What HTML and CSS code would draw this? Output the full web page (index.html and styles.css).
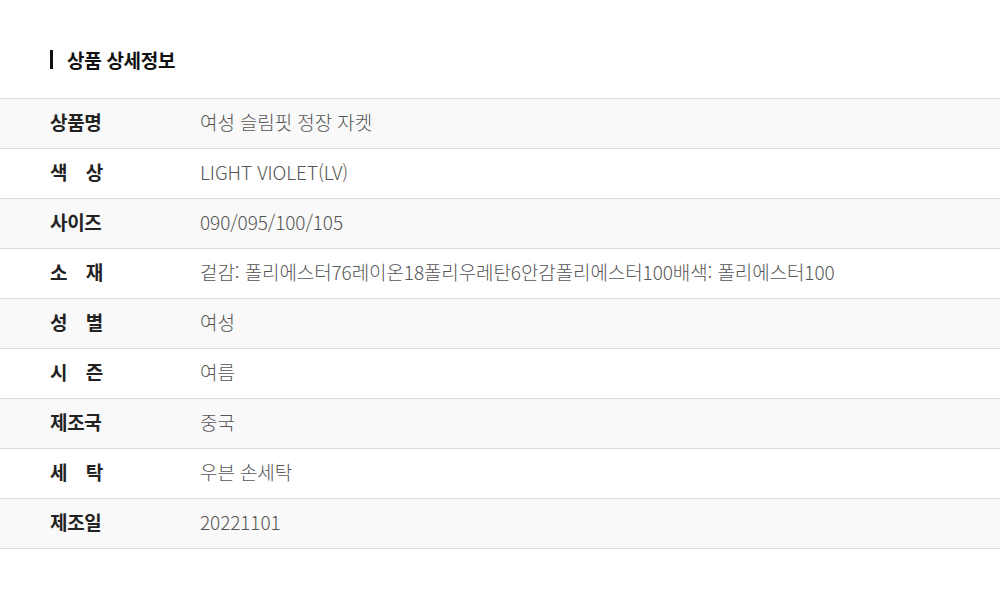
FILE: index.html
```html
<!DOCTYPE html>
<html lang="ko">
<head>
  <meta charset="UTF-8">
  <title>상품 상세정보</title>
  <link rel="stylesheet" href="styles.css">
</head>
<body>

  <section class="detail">
    <h2 class="detail-title">상품 상세정보</h2>

    <table class="info-table">
      <tr>
        <th><span class="label">상품명</span></th>
        <td>여성 슬림핏 정장 자켓</td>
      </tr>
      <tr>
        <th><span class="label">색 상</span></th>
        <td>LIGHT VIOLET(LV)</td>
      </tr>
      <tr>
        <th><span class="label">사이즈</span></th>
        <td>090/095/100/105</td>
      </tr>
      <tr>
        <th><span class="label">소 재</span></th>
        <td>겉감: 폴리에스터76레이온18폴리우레탄6안감폴리에스터100배색: 폴리에스터100</td>
      </tr>
      <tr>
        <th><span class="label">성 별</span></th>
        <td>여성</td>
      </tr>
      <tr>
        <th><span class="label">시 즌</span></th>
        <td>여름</td>
      </tr>
      <tr>
        <th><span class="label">제조국</span></th>
        <td>중국</td>
      </tr>
      <tr>
        <th><span class="label">세 탁</span></th>
        <td>우븐 손세탁</td>
      </tr>
      <tr>
        <th><span class="label">제조일</span></th>
        <td>20221101</td>
      </tr>
    </table>
  </section>

</body>
</html>
```

FILE: styles.css
```css
* {
  margin: 0;
  padding: 0;
  box-sizing: border-box;
}

body {
  font-family: 'Noto Sans CJK KR', 'Noto Sans', sans-serif;
  background: #fff;
  color: #222;
}

.detail {
  padding-top: 49px;
}

.detail-title {
  display: flex;
  align-items: center;
  margin-left: 50px;
  height: 21px;
  font-size: 19px;
  font-weight: 700;
  letter-spacing: -0.3px;
  line-height: 1;
  color: #111;
}

.detail-title::before {
  content: "";
  width: 3px;
  height: 19px;
  background: #111;
  margin-right: 14px;
}

.info-table {
  width: 100%;
  margin-top: 28px;
  border-collapse: collapse;
  border-top: 1px solid #ddd;
}

.info-table tr {
  height: 50px;
  border-bottom: 1px solid #ddd;
}

.info-table tr:nth-child(odd) {
  background: #f9f9f9;
}

.info-table th,
.info-table td {
  padding-bottom: 4px;
  line-height: 1;
}

.info-table th {
  width: 200px;
  padding-left: 50px;
  text-align: left;
  font-size: 19px;
  font-weight: 700;
  color: #222;
}

.label {
  display: inline-block;
  width: 53px;
  letter-spacing: -0.3px;
  text-align: justify;
  text-align-last: justify;
}

.info-table td {
  font-size: 19px;
  font-weight: 300;
  letter-spacing: -0.1px;
  color: #555;
}
```
